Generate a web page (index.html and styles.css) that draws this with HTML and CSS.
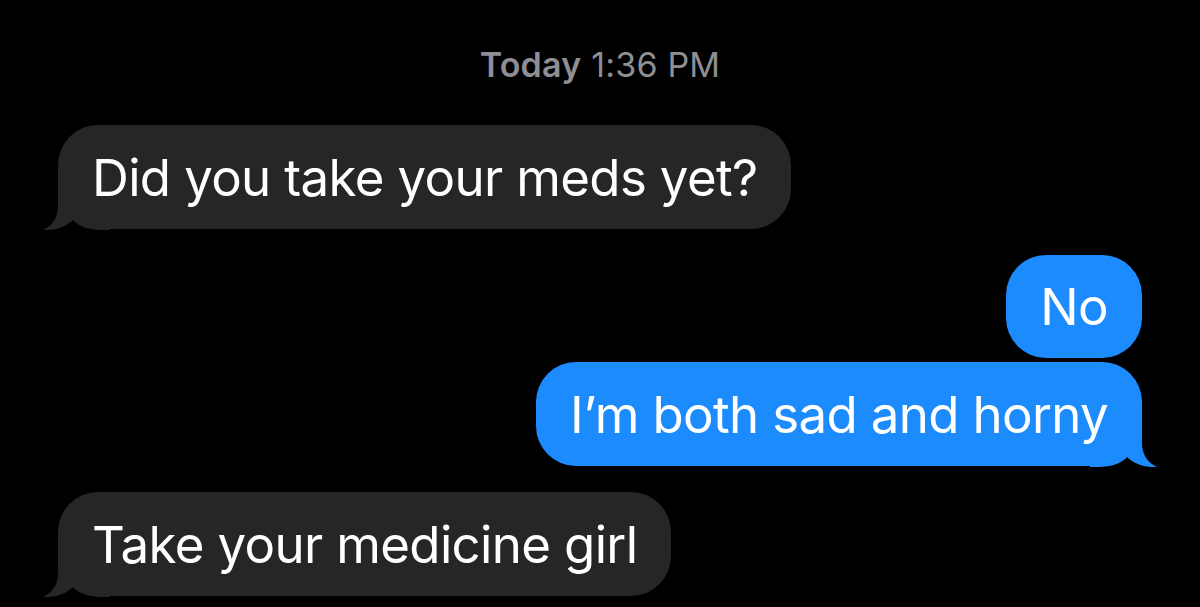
FILE: index.html
```html
<!DOCTYPE html>
<html lang="en">
<head>
<meta charset="utf-8">
<title>Messages</title>
<link rel="stylesheet" href="styles.css">
</head>
<body>
<main class="thread">
  <div class="stamp"><span class="stamp-day">Today</span> 1:36 PM</div>

  <div class="row row-in">
    <div class="bubble bubble-in">
      <svg class="tail tail-in" viewBox="0 0 70 50" width="70" height="50" aria-hidden="true"><path d="M18 0 L18 26 C18 38 12 46 3 50 C14 51 26 47 33 40 C38 46 48 50 62 50 L70 50 L70 0 Z"/></svg>
      <span class="txt">Did you take your meds yet?</span>
    </div>
  </div>

  <div class="group group-out">
    <div class="row row-out">
      <div class="bubble bubble-out"><span class="txt">No</span></div>
    </div>
    <div class="row row-out">
      <div class="bubble bubble-out">
        <svg class="tail tail-out" viewBox="0 0 70 50" width="70" height="50" aria-hidden="true"><path d="M52 0 L52 26 C52 38 58 46 67 50 C56 51 44 47 37 40 C32 46 22 50 8 50 L0 50 L0 0 Z"/></svg>
        <span class="txt">I’m both sad and horny</span>
      </div>
    </div>
  </div>

  <div class="row row-in">
    <div class="bubble bubble-in">
      <svg class="tail tail-in" viewBox="0 0 70 50" width="70" height="50" aria-hidden="true"><path d="M18 0 L18 26 C18 38 12 46 3 50 C14 51 26 47 33 40 C38 46 48 50 62 50 L70 50 L70 0 Z"/></svg>
      <span class="txt">Take your medicine girl</span>
    </div>
  </div>
</main>
</body>
</html>
```

FILE: styles.css
```css
html, body {
  margin: 0;
  padding: 0;
  background: #000;
  height: 100%;
  overflow: hidden;
}

.thread {
  display: flex;
  flex-direction: column;
  padding: 45px 58px 0 58px;
  font-family: Inter, "Liberation Sans", sans-serif;
  color: #fff;
}

.stamp {
  text-align: center;
  color: #8e8e93;
  font-size: 34px;
  line-height: 40px;
  height: 40px;
  margin-bottom: 40px;
  letter-spacing: 0.2px;
}

.stamp-day {
  font-weight: 600;
}

.group {
  display: flex;
  flex-direction: column;
  gap: 4px;
}

.row {
  display: flex;
}

.row-in {
  justify-content: flex-start;
}

.row-out {
  justify-content: flex-end;
}

.group-out {
  margin: 26px 0;
}

.bubble {
  position: relative;
  z-index: 0;
  display: flex;
  align-items: center;
  height: 104px;
  padding: 0 34px;
  border-radius: 40px;
  font-size: 51px;
  letter-spacing: -0.65px;
  white-space: nowrap;
}

.bubble-in {
  background: #262628;
}

.bubble-out {
  background: #1c8bfd;
}

.group-out .row:first-child .bubble {
  height: 103px;
}

.tail {
  position: absolute;
  bottom: -1px;
  z-index: -1;
}

.tail-in {
  left: -18px;
  fill: #262628;
}

.tail-out {
  right: -18px;
  fill: #1c8bfd;
}

.txt {
  position: relative;
}
```
